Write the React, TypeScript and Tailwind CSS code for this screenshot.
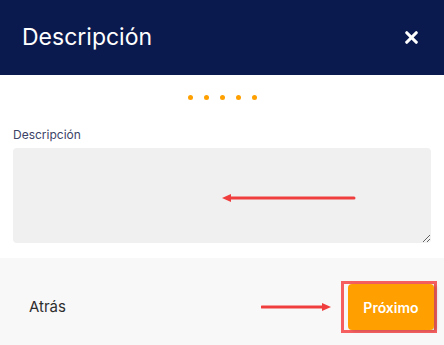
import { X } from "lucide-react";

const font = { fontFamily: "Inter, 'Noto Sans', sans-serif" };

const LeftArrow = () => (
  <svg width="134" height="10" viewBox="0 0 134 10" className="absolute left-[209px] top-[45px]">
    <line x1="8" y1="5" x2="132" y2="5" stroke="#f03e3e" strokeWidth="3" strokeLinecap="round" />
    <polygon points="0,5 9,1 9,9" fill="#f03e3e" />
  </svg>
);

const RightArrow = () => (
  <svg width="70" height="10" viewBox="0 0 70 10">
    <line x1="1" y1="5" x2="62" y2="5" stroke="#f03e3e" strokeWidth="3" strokeLinecap="round" />
    <polygon points="70,5 61,1 61,9" fill="#f03e3e" />
  </svg>
);

export default function App() {
  return (
    <div className="flex h-[345px] w-[444px] flex-col overflow-hidden bg-white" style={font}>
      <div className="flex h-[75px] shrink-0 items-center justify-between bg-[#0b1a4e] pl-[22px] pr-[23px]">
        <h2 className="text-[23px] leading-none text-white">Descripción</h2>
        <X className="h-[19px] w-[19px] text-white" strokeWidth={4} />
      </div>

      <div className="flex flex-col px-[13px] pt-[20px] pb-[15px]">
        <div className="flex justify-center gap-[11px] pl-[1px]">
          {[0, 1, 2, 3, 4].map((i) => (
            <span key={i} className="h-[5px] w-[5px] rounded-full bg-[#ffa000]" />
          ))}
        </div>
        <label className="mt-[27px] text-[12px] leading-[16px] text-[#3c4468]">Descripción</label>
        <div className="relative mt-[5px]">
          <textarea className="block h-[95px] w-full resize-y rounded-[4px] bg-[#f0f0f0] outline-none" />
          <LeftArrow />
        </div>
      </div>

      <div className="flex h-[98px] shrink-0 items-center bg-[#f8f8f8] pl-[29px] pr-[7px]">
        <span className="text-[15px] text-[#2e2e2e]">Atrás</span>
        <div className="ml-auto mr-[10px] flex items-center">
          <RightArrow />
        </div>
        <div className="border-[3px] border-[#f55f5f] pl-[4px]">
          <button className="h-[46px] w-[86px] rounded-[4px] bg-[#ffa000] text-[14px] font-semibold text-white shadow-[3px_1px_3px_rgba(0,0,0,0.15)]">
            Próximo
          </button>
        </div>
      </div>
    </div>
  );
}
